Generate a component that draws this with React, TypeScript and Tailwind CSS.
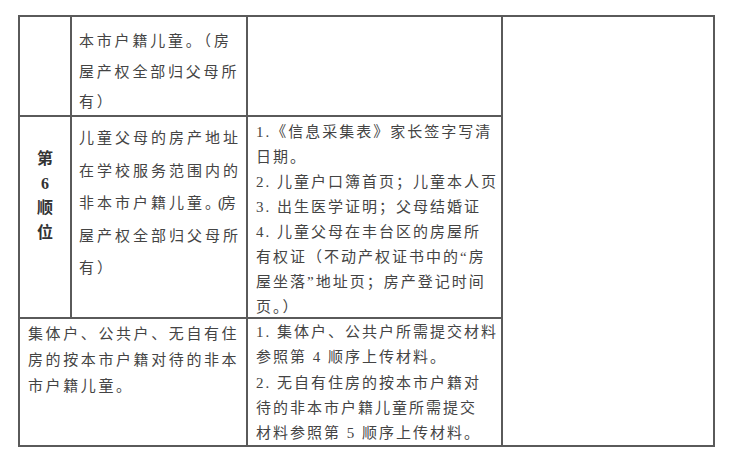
import React from "react";

const font = { fontFamily: '"Liberation Serif", "Noto Sans CJK SC", serif' };

function Lines({ lines, className }: { lines: React.ReactNode[]; className: string }) {
  return (
    <div className={className}>
      {lines.map((l, i) => (
        <div key={i} className="whitespace-nowrap">
          {l}
        </div>
      ))}
    </div>
  );
}

export default function App() {
  const cell = "border-r-2 border-b-2 border-[#5a5a5a] box-border";
  return (
    <div className="w-[750px] h-[459px] bg-white pt-[15px] pl-[18px] text-[#444]" style={font}>
      <div className="grid grid-cols-[52px_176px_255px_212px] grid-rows-[100px_202px_128px] border-t-2 border-l-2 border-[#5a5a5a] w-[697px]">
        {/* row 1 */}
        <div className={cell}></div>
        <div className={cell}>
          <Lines
            className="pl-[7px] pt-[9px] text-[15px] leading-[30.5px] tracking-[2.8px]"
            lines={["本市户籍儿童。（房", "屋产权全部归父母所", "有）"]}
          />
        </div>
        <div className={cell}></div>
        <div className="row-span-3 border-r-2 border-b-2 border-[#5a5a5a]"></div>

        {/* row 2 */}
        <div className={cell}>
          <div className="flex flex-col items-center pt-[30px] text-[16px] leading-[24.6px] font-bold text-[#333]">
            <div>第</div>
            <div>6</div>
            <div>顺</div>
            <div>位</div>
          </div>
        </div>
        <div className={cell}>
          <Lines
            className="pl-[7px] pt-[5px] text-[15px] leading-[32.5px] tracking-[3px]"
            lines={[
              "儿童父母的房产地址",
              "在学校服务范围内的",
              <>
                非本市户籍儿童<span className="tracking-[-2px]">。(</span>房
              </>,
              "屋产权全部归父母所",
              "有）",
            ]}
          />
        </div>
        <div className={cell}>
          <Lines
            className="pl-[8px] pt-[3px] text-[15px] leading-[25px] tracking-[2px]"
            lines={[
              "1.《信息采集表》家长签字写清",
              "日期。",
              "2. 儿童户口簿首页；儿童本人页",
              "3. 出生医学证明；父母结婚证",
              "4. 儿童父母在丰台区的房屋所",
              "有权证（不动产权证书中的“房",
              "屋坐落”地址页；房产登记时间",
              "页。）",
            ]}
          />
        </div>

        {/* row 3 */}
        <div className={`${cell} col-span-2`}>
          <Lines
            className="pl-[8px] pt-[2px] text-[15px] leading-[26px] tracking-[2.6px]"
            lines={["集体户、公共户、无自有住", "房的按本市户籍对待的非本", "市户籍儿童。"]}
          />
        </div>
        <div className={cell}>
          <Lines
            className="pl-[8px] pt-[1px] text-[15px] leading-[25.3px] tracking-[2px]"
            lines={[
              "1. 集体户、公共户所需提交材料",
              "参照第 4 顺序上传材料。",
              "2. 无自有住房的按本市户籍对",
              "待的非本市户籍儿童所需提交",
              "材料参照第 5 顺序上传材料。",
            ]}
          />
        </div>
      </div>
    </div>
  );
}
